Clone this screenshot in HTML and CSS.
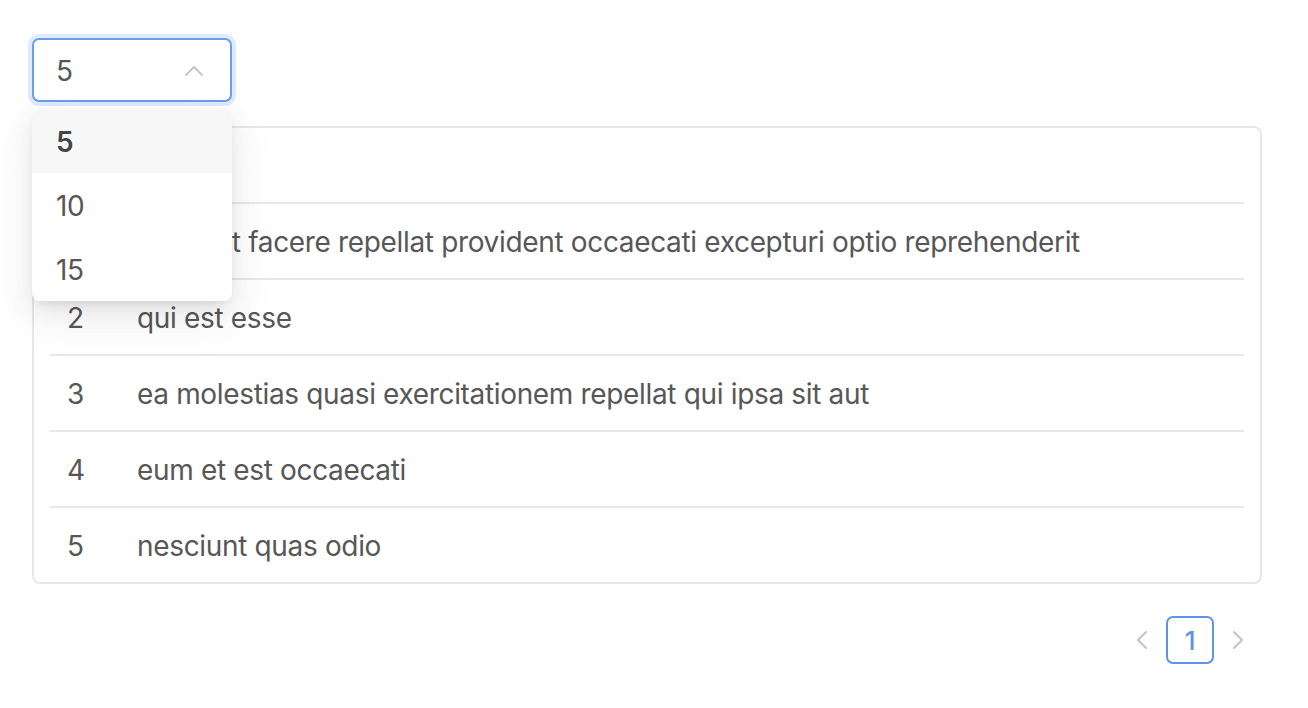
FILE: index.html
```html
<!DOCTYPE html>
<html lang="en">
<head>
<meta charset="utf-8">
<title>Posts</title>
<link rel="stylesheet" href="styles.css">
</head>
<body>
<div class="page">
  <div class="select-wrap">
    <div class="select">
      <span class="select-value">5</span>
      <svg class="select-arrow" width="20" height="14" viewBox="0 0 20 14"><path d="M2 11 L10 3 L18 11" fill="none" stroke="#c4c4c4" stroke-width="1.8" stroke-linecap="round" stroke-linejoin="round"/></svg>
    </div>
    <ul class="dropdown">
      <li class="option option-active">5</li>
      <li class="option">10</li>
      <li class="option">15</li>
    </ul>
  </div>

  <div class="table">
    <div class="row head">
      <div class="cell id"></div>
      <div class="cell title"></div>
    </div>
    <div class="row">
      <div class="cell id">1</div>
      <div class="cell title">sunt aut facere repellat provident occaecati excepturi optio reprehenderit</div>
    </div>
    <div class="row">
      <div class="cell id">2</div>
      <div class="cell title">qui est esse</div>
    </div>
    <div class="row">
      <div class="cell id">3</div>
      <div class="cell title">ea molestias quasi exercitationem repellat qui ipsa sit aut</div>
    </div>
    <div class="row">
      <div class="cell id">4</div>
      <div class="cell title">eum et est occaecati</div>
    </div>
    <div class="row">
      <div class="cell id">5</div>
      <div class="cell title">nesciunt quas odio</div>
    </div>
  </div>

  <div class="pagination">
    <span class="pg-arrow">
      <svg width="14" height="20" viewBox="0 0 14 20"><path d="M11 2 L3 10 L11 18" fill="none" stroke="#c4c4c4" stroke-width="2" stroke-linecap="round" stroke-linejoin="round"/></svg>
    </span>
    <span class="pg-item">1</span>
    <span class="pg-arrow">
      <svg width="14" height="20" viewBox="0 0 14 20"><path d="M3 2 L11 10 L3 18" fill="none" stroke="#c4c4c4" stroke-width="2" stroke-linecap="round" stroke-linejoin="round"/></svg>
    </span>
  </div>
</div>
</body>
</html>
```

FILE: styles.css
```css
* { box-sizing: border-box; }
html, body { margin: 0; padding: 0; background: #fff; }
body {
  font-family: Inter, "Liberation Sans", Arial, sans-serif;
  font-size: 28px;
  letter-spacing: -0.34px;
  color: #575757;
}
.page {
  padding: 38px 46px 0 32px;
}
.select-wrap {
  position: relative;
  width: 200px;
  z-index: 2;
}
.select {
  height: 64px;
  border: 2px solid #6a9ef0;
  border-radius: 7px;
  box-shadow: 0 0 0 4px rgba(80, 140, 240, 0.18);
  display: flex;
  align-items: center;
  justify-content: space-between;
  padding: 2px 26px 0 22px;
  background: #fff;
}
.select-value { line-height: 1; }
.select-arrow { display: block; margin-top: 0; }
.dropdown {
  position: absolute;
  top: 71px;
  left: 0;
  width: 200px;
  margin: 0;
  padding: 0;
  list-style: none;
  background: #fff;
  border-radius: 8px;
  overflow: hidden;
  box-shadow: 0 6px 12px -6px rgba(0,0,0,0.14), 0 10px 28px 0 rgba(0,0,0,0.08), 0 16px 48px 10px rgba(0,0,0,0.04);
}
.option {
  height: 64px;
  display: flex;
  align-items: center;
  padding: 2px 0 0 24px;
}
.option-active {
  background: #f7f7f7;
  font-weight: 600;
  color: #444;
}
.table {
  margin-top: 24px;
  border: 2px solid #e8e8e8;
  border-radius: 8px;
  padding: 0 16px;
}
.row {
  display: flex;
  height: 76px;
  border-top: 2px solid #e8e8e8;
  align-items: center;
  padding-top: 2px;
}
.row.head {
  height: 74px;
  border-top: none;
}
.cell.id {
  width: 87px;
  padding-left: 17px;
  flex: none;
}
.cell.title {
  flex: 1;
  white-space: nowrap;
}
.pagination {
  display: flex;
  justify-content: flex-end;
  margin-top: 32px;
}
.pg-arrow {
  width: 48px;
  height: 48px;
  display: flex;
  align-items: center;
  justify-content: center;
}
.pg-item {
  width: 48px;
  height: 48px;
  border: 2px solid #5f93ea;
  border-radius: 7px;
  color: #5f93ea;
  font-size: 26px;
  font-weight: 500;
  display: flex;
  align-items: center;
  justify-content: center;
}
```
